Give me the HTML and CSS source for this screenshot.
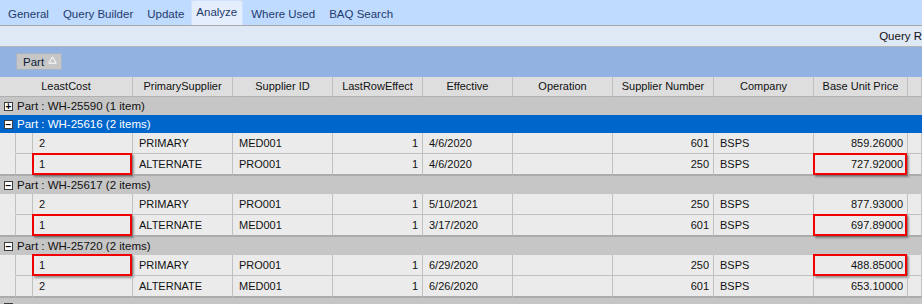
FILE: index.html
```html
<!DOCTYPE html>
<html lang="en">
	<head>
		<meta charset="utf-8" />
		<title>BAQ Designer - Analyze</title>
		<link rel="stylesheet" href="styles.css">
	</head>
	<body>
		<div class="tabs">
			<div class="tab">General</div>
			<div class="tab">Query Builder</div>
			<div class="tab">Update</div>
			<div class="tab active">Analyze</div>
			<div class="tab">Where Used</div>
			<div class="tab">BAQ Search</div>
		</div>
		<div class="toolbar"><span class="toolLabel">Query Results</span></div>
		<div class="groupBy">
			<div class="groupChip">Part
				<svg width="9" height="8" viewBox="0 0 9 8"><path d="M4.5 0.8 L8.2 7.2 L0.8 7.2 Z" fill="none" stroke="#FFFFFF" stroke-width="1"/></svg>
			</div>
		</div>
		<div class="grid">
			<div class="row header">
				<div class="cell first">LeastCost</div>
				<div class="cell">PrimarySupplier</div>
				<div class="cell">Supplier ID</div>
				<div class="cell">LastRowEffect</div>
				<div class="cell">Effective</div>
				<div class="cell">Operation</div>
				<div class="cell">Supplier Number</div>
				<div class="cell">Company</div>
				<div class="cell">Base Unit Price</div>
				<div class="cell"></div>
			</div>

			<div class="group"><span class="expander">+</span>Part : WH-25590 (1 item)</div>

			<div class="group selected"><span class="expander">&minus;</span>Part : WH-25616 (2 items)</div>
			<div class="row">
				<div class="indent"></div><div class="cell sel"></div>
				<div class="cell">2</div><div class="cell">PRIMARY</div><div class="cell">MED001</div>
				<div class="cell num">1</div><div class="cell">4/6/2020</div><div class="cell"></div>
				<div class="cell num">601</div><div class="cell">BSPS</div><div class="cell num">859.26000</div><div class="cell"></div>
			</div>
			<div class="row last">
				<div class="indent"></div><div class="cell sel"></div>
				<div class="cell hl">1</div><div class="cell">ALTERNATE</div><div class="cell">PRO001</div>
				<div class="cell num">1</div><div class="cell">4/6/2020</div><div class="cell"></div>
				<div class="cell num">250</div><div class="cell">BSPS</div><div class="cell num hl">727.92000</div><div class="cell"></div>
			</div>

			<div class="group"><span class="expander">&minus;</span>Part : WH-25617 (2 items)</div>
			<div class="row">
				<div class="indent"></div><div class="cell sel"></div>
				<div class="cell">2</div><div class="cell">PRIMARY</div><div class="cell">PRO001</div>
				<div class="cell num">1</div><div class="cell">5/10/2021</div><div class="cell"></div>
				<div class="cell num">250</div><div class="cell">BSPS</div><div class="cell num">877.93000</div><div class="cell"></div>
			</div>
			<div class="row last">
				<div class="indent"></div><div class="cell sel"></div>
				<div class="cell hl">1</div><div class="cell">ALTERNATE</div><div class="cell">MED001</div>
				<div class="cell num">1</div><div class="cell">3/17/2020</div><div class="cell"></div>
				<div class="cell num">601</div><div class="cell">BSPS</div><div class="cell num hl">697.89000</div><div class="cell"></div>
			</div>

			<div class="group"><span class="expander">&minus;</span>Part : WH-25720 (2 items)</div>
			<div class="row">
				<div class="indent"></div><div class="cell sel"></div>
				<div class="cell hl">1</div><div class="cell">PRIMARY</div><div class="cell">PRO001</div>
				<div class="cell num">1</div><div class="cell">6/29/2020</div><div class="cell"></div>
				<div class="cell num">250</div><div class="cell">BSPS</div><div class="cell num hl">488.85000</div><div class="cell"></div>
			</div>
			<div class="row last">
				<div class="indent"></div><div class="cell sel"></div>
				<div class="cell">2</div><div class="cell">ALTERNATE</div><div class="cell">MED001</div>
				<div class="cell num">1</div><div class="cell">6/26/2020</div><div class="cell"></div>
				<div class="cell num">601</div><div class="cell">BSPS</div><div class="cell num">653.10000</div><div class="cell"></div>
			</div>

			<div class="group"><span class="expander">+</span></div>
		</div>
	</body>
</html>
```

FILE: styles.css
```css
html, body {
	margin: 0;
	padding: 0;
	width: 922px;
	height: 304px;
	overflow: hidden;
	background-color: #EBEBEB;
	font-family: "Liberation Sans", Arial, sans-serif;
	font-size: 11px;
	color: #111111;
}
.tabs {
	display: flex;
	height: 26px;
	padding-left: 1px;
	background-color: #BFDBFF;
	border-bottom: 1px solid #A9A9A9;
	box-sizing: border-box;
	align-items: flex-end;
}
.tab {
	height: 24px;
	line-height: 27px;
	padding: 0 7px;
	font-size: 11.5px;
	color: #1E3A6E;
}
.tab.active {
	background-color: #E4EEFC;
	border: 1px solid #D2E2F8;
	border-bottom: none;
	border-radius: 3px 3px 0 0;
	line-height: 22px;
	padding: 0 5px 0 4px;
	margin: 0 1px 0 0;
}
.toolbar {
	display: flex;
	justify-content: flex-end;
	height: 21px;
	background-color: #DFE8F5;
	border-bottom: 1px solid #B4B4B4;
	box-sizing: border-box;
	overflow: hidden;
}
.toolLabel {
	line-height: 21px;
	white-space: nowrap;
	margin-right: -30px;
	font-size: 11.5px;
}
.groupBy {
	height: 30px;
	background-color: #92B3E1;
	padding: 6px 0 0 16px;
	box-sizing: border-box;
}
.groupChip {
	display: inline-flex;
	align-items: center;
	gap: 4px;
	height: 17px;
	padding: 0 4px 0 6px;
	background-color: #C6C6C6;
	border: 1px solid #A7B4C6;
	box-sizing: border-box;
	font-size: 11.5px;
	color: #101A3A;
}
.groupChip svg {
	margin-top: -4px;
}
.row {
	display: grid;
	grid-template-columns: 16px 17px 100px 100px 100px 90px 90px 100px 101px 100px 94px 1fr;
	height: 21px;
	background-color: #EBEBEB;
}
.row.last {
	height: 22px;
}
.cell {
	position: relative;
	padding: 0 6px;
	line-height: 20px;
	white-space: nowrap;
	overflow: visible;
	border-right: 1px solid #C0C0C0;
	border-bottom: 1px solid #C0C0C0;
	box-sizing: border-box;
}
.row.last .cell {
	border-bottom: 2px solid #ABABAB;
}
.indent {
	border-right: 1px solid #C0C0C0;
	border-bottom: 1px solid #EBEBEB;
}
.row.last .indent {
	border-bottom: 2px solid #ABABAB;
}
.cell.sel {
	padding: 0;
}
.cell.num {
	text-align: right;
	padding-right: 4px;
}
.header {
	height: 20px;
	background-color: #DEDEDE;
}
.header .cell {
	text-align: center;
	line-height: 19px;
	padding: 0;
	border-bottom: 1px solid #B0B0B0;
}
.header .cell.first {
	grid-column: span 3;
}
.group {
	display: flex;
	align-items: center;
	height: 18px;
	padding-left: 4px;
	background-color: #C6C6C6;
	font-size: 11.5px;
	color: #111111;
}
.group.selected {
	background-color: #0066CC;
	color: #FFFFFF;
}
.expander {
	display: inline-flex;
	align-items: center;
	justify-content: center;
	width: 9px;
	height: 9px;
	margin-right: 4px;
	background-color: #FFFFFF;
	border: 1px solid #3C3C3C;
	box-sizing: border-box;
	font-size: 10px;
	line-height: 7px;
	font-weight: bold;
	color: #000000;
}
.cell.hl::after {
	content: "";
	position: absolute;
	top: -1px;
	left: -1px;
	right: 0;
	bottom: -1px;
	border: 2px solid #F00000;
	box-shadow: 2px 2px 2px rgba(0, 0, 0, 0.35);
	pointer-events: none;
}
```
